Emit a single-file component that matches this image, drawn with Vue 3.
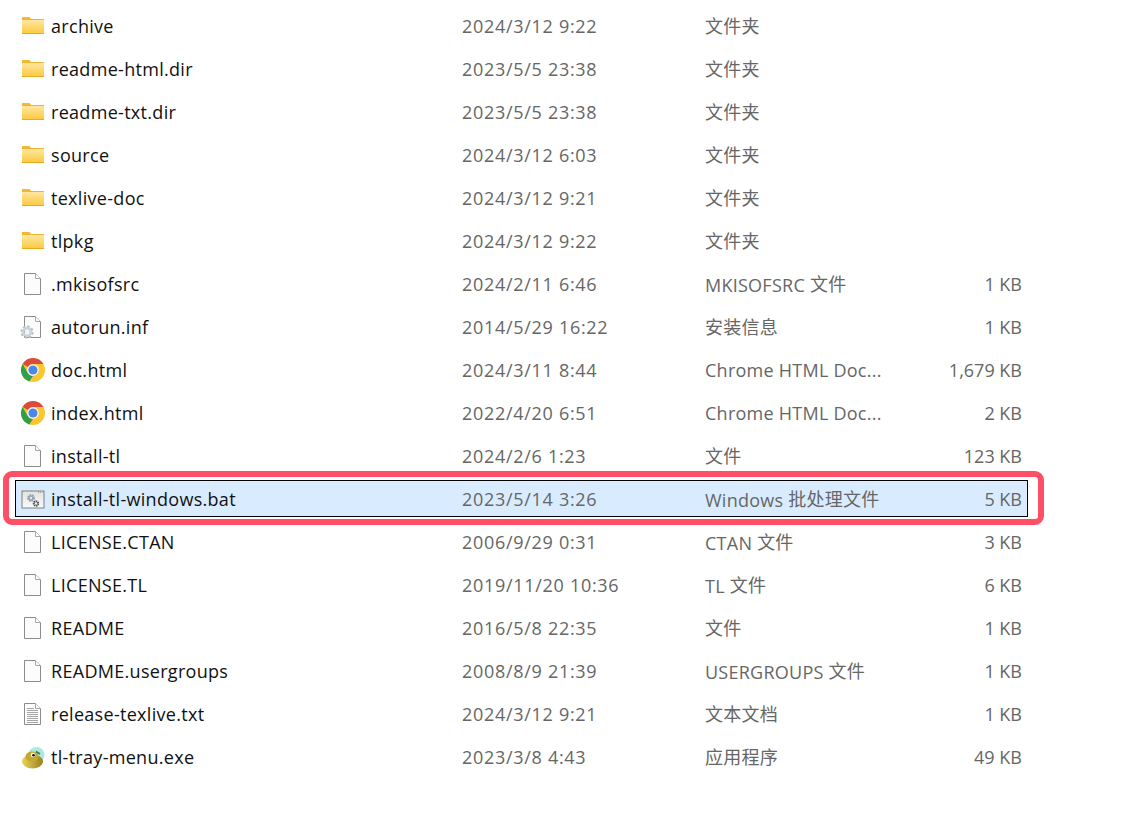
<script setup>
const rows = [
  { n: 'archive', d: '2024/3/12 9:22', t: '文件夹', s: '', i: 'folder' },
  { n: 'readme-html.dir', d: '2023/5/5 23:38', t: '文件夹', s: '', i: 'folder' },
  { n: 'readme-txt.dir', d: '2023/5/5 23:38', t: '文件夹', s: '', i: 'folder' },
  { n: 'source', d: '2024/3/12 6:03', t: '文件夹', s: '', i: 'folder' },
  { n: 'texlive-doc', d: '2024/3/12 9:21', t: '文件夹', s: '', i: 'folder' },
  { n: 'tlpkg', d: '2024/3/12 9:22', t: '文件夹', s: '', i: 'folder' },
  { n: '.mkisofsrc', d: '2024/2/11 6:46', t: 'MKISOFSRC 文件', s: '1 KB', i: 'file' },
  { n: 'autorun.inf', d: '2014/5/29 16:22', t: '安装信息', s: '1 KB', i: 'inf' },
  { n: 'doc.html', d: '2024/3/11 8:44', t: 'Chrome HTML Doc...', s: '1,679 KB', i: 'chrome' },
  { n: 'index.html', d: '2022/4/20 6:51', t: 'Chrome HTML Doc...', s: '2 KB', i: 'chrome' },
  { n: 'install-tl', d: '2024/2/6 1:23', t: '文件', s: '123 KB', i: 'file' },
  { n: 'install-tl-windows.bat', d: '2023/5/14 3:26', t: 'Windows 批处理文件', s: '5 KB', i: 'bat', sel: true },
  { n: 'LICENSE.CTAN', d: '2006/9/29 0:31', t: 'CTAN 文件', s: '3 KB', i: 'file' },
  { n: 'LICENSE.TL', d: '2019/11/20 10:36', t: 'TL 文件', s: '6 KB', i: 'file' },
  { n: 'README', d: '2016/5/8 22:35', t: '文件', s: '1 KB', i: 'file' },
  { n: 'README.usergroups', d: '2008/8/9 21:39', t: 'USERGROUPS 文件', s: '1 KB', i: 'file' },
  { n: 'release-texlive.txt', d: '2024/3/12 9:21', t: '文本文档', s: '1 KB', i: 'txt' },
  { n: 'tl-tray-menu.exe', d: '2023/3/8 4:43', t: '应用程序', s: '49 KB', i: 'exe' },
].map((r) => ({
  ...r,
  parts: r.t.split(/([^\x00-\x7f]+)/).filter(Boolean).map((text) => ({ text, cjk: /[^\x00-\x7f]/.test(text) })),
}))
</script>

<template>
  <div class="list">
    <div v-for="r in rows" :key="r.n" class="row" :class="{ sel: r.sel }">
      <span class="ico">
        <svg v-if="r.i === 'folder'" width="26" height="26" viewBox="0 0 26 26">
          <defs>
            <linearGradient id="fg" x1="0" y1="0" x2="0" y2="1">
              <stop offset="0" stop-color="#fee9a6" />
              <stop offset="1" stop-color="#fdc83c" />
            </linearGradient>
          </defs>
          <path d="M3 4h7.500l2 2.500H3z" fill="#f5b82e" />
          <rect x="3" y="6" width="22" height="15" fill="url(#fg)" />
          <rect x="3" y="6" width="22" height="1" fill="#efb52f" />
          <rect x="3" y="20" width="22" height="1" fill="#e8a923" />
        </svg>
        <svg v-else-if="r.i === 'file' || r.i === 'txt' || r.i === 'inf'" width="26" height="26" viewBox="0 0 26 26">
          <path d="M5.500 2.500h11l5 5v16h-16z" fill="#fcfcfc" stroke="#8c8c8c" />
          <path d="M16.500 2.500v5h5" fill="#fff" stroke="#a8a8a8" />
          <g v-if="r.i === 'txt'" stroke="#a6a6a6" stroke-width="1">
            <path d="M8 7.500h7M8 9.500h11M8 11.500h11M8 13.500h11M8 15.500h11M8 17.500h11M8 19.500h11M8 21.500h11" />
          </g>
          <g v-if="r.i === 'inf'">
            <circle cx="8" cy="18" r="4.800" fill="none" stroke="#b4bfc6" stroke-width="3.600" stroke-dasharray="2.200 1.500" />
            <circle cx="8" cy="18" r="3.800" fill="none" stroke="#cbd4da" stroke-width="2.600" />
            <circle cx="8" cy="18" r="1.700" fill="#eef1f3" />
          </g>
        </svg>
        <svg v-else-if="r.i === 'chrome'" width="26" height="26" viewBox="-1 0 26 26">
          <circle cx="13" cy="13" r="12" fill="#fbc62e" />
          <path d="M13 1A12 12 0 0 1 23.400 7H13a6 6 0 0 0-5.200 3L2.600 7A12 12 0 0 1 13 1z" fill="#dc4a3d" />
          <path d="M2.600 7l5.200 9a6 6 0 0 0 5.200 3l-3.700 5.500A12 12 0 0 1 2.600 7z" fill="#2f9e4f" />
          <circle cx="13" cy="13" r="5.800" fill="#fff" />
          <circle cx="13" cy="13" r="4.600" fill="#4a86ec" />
        </svg>
        <svg v-else-if="r.i === 'bat'" width="26" height="26" viewBox="0 0 26 26">
          <defs>
            <linearGradient id="bg" x1="0" y1="0" x2="0" y2="1">
              <stop offset="0" stop-color="#e2e2e2" />
              <stop offset="1" stop-color="#fafafa" />
            </linearGradient>
          </defs>
          <rect x="3" y="5" width="22" height="17" fill="url(#bg)" stroke="#7f7f7f" />
          <path d="M19 6.500h4.500" stroke="#9a9a9a" stroke-dasharray="1 1" />
          <circle cx="12" cy="12" r="2.800" fill="#9aa4ad" stroke="#9aa4ad" stroke-width="2.400" stroke-dasharray="1.500 .8" />
          <circle cx="12" cy="12" r="1.200" fill="#e8e8e8" />
          <circle cx="17" cy="17.500" r="2.200" fill="#eee" stroke="#4f5256" stroke-width="2" stroke-dasharray="1.300 .5" />
        </svg>
        <svg v-else width="26" height="26" viewBox="0 0 26 26">
          <defs>
            <linearGradient id="eg" x1="0" y1="0" x2="1" y2="0">
              <stop offset="0" stop-color="#ead35c" />
              <stop offset="1" stop-color="#9a7f1e" />
            </linearGradient>
          </defs>
          <circle cx="17.500" cy="11" r="8" fill="#ade9df" />
          <ellipse cx="13.500" cy="17.500" rx="10.500" ry="7" fill="url(#eg)" />
          <ellipse cx="13" cy="12.500" rx="6.500" ry="5" fill="#c4a82e" />
          <circle cx="14" cy="11" r="2.300" fill="#fff" />
          <circle cx="14.500" cy="11.300" r="1.300" fill="#111" />
          <path d="M17 7.500l4 2.500" stroke="#2c7a4a" stroke-width="1.600" />
        </svg>
      </span>
      <span class="name">{{ r.n }}</span>
      <span class="date">{{ r.d }}</span>
      <span class="type"><span v-for="(p, k) in r.parts" :key="k" :class="{ cjk: p.cjk }">{{ p.text }}</span></span>
      <span class="size">{{ r.s }}</span>
    </div>
  </div>
</template>

<style scoped>
.list {
  width: 1127px;
  height: 816px;
  box-sizing: border-box;
  padding: 7px 0 0 15px;
  display: flex;
  flex-direction: column;
  gap: 6px;
  background: #fff;
  font-family: "Open Sans", "Noto Sans CJK SC", sans-serif;
  font-size: 18px;
  overflow: hidden;
}
.row {
  position: relative;
  width: 1013px;
  height: 37px;
  box-sizing: border-box;
  display: flex;
  align-items: center;
  flex: none;
  border: 1px solid transparent;
}
.sel {
  background: #d9ecff;
  border-color: #000;
}
.sel::after {
  content: "";
  position: absolute;
  left: -13px;
  top: -10px;
  right: -17px;
  bottom: -9px;
  border: 6px solid #ff4f66;
  border-radius: 9px;
}
.ico {
  width: 32px;
  margin-left: 3px;
  display: flex;
  flex: none;
}
.name { width: 411px; flex: none; color: #111; letter-spacing: 0.3px; }
.date { width: 243px; flex: none; color: #666; letter-spacing: 0.7px; }
.type { width: 210px; flex: none; color: #666; white-space: nowrap; letter-spacing: 0.25px; }
.cjk { vertical-align: 1px; }
.size { width: 107px; flex: none; text-align: right; color: #666; }
</style>
